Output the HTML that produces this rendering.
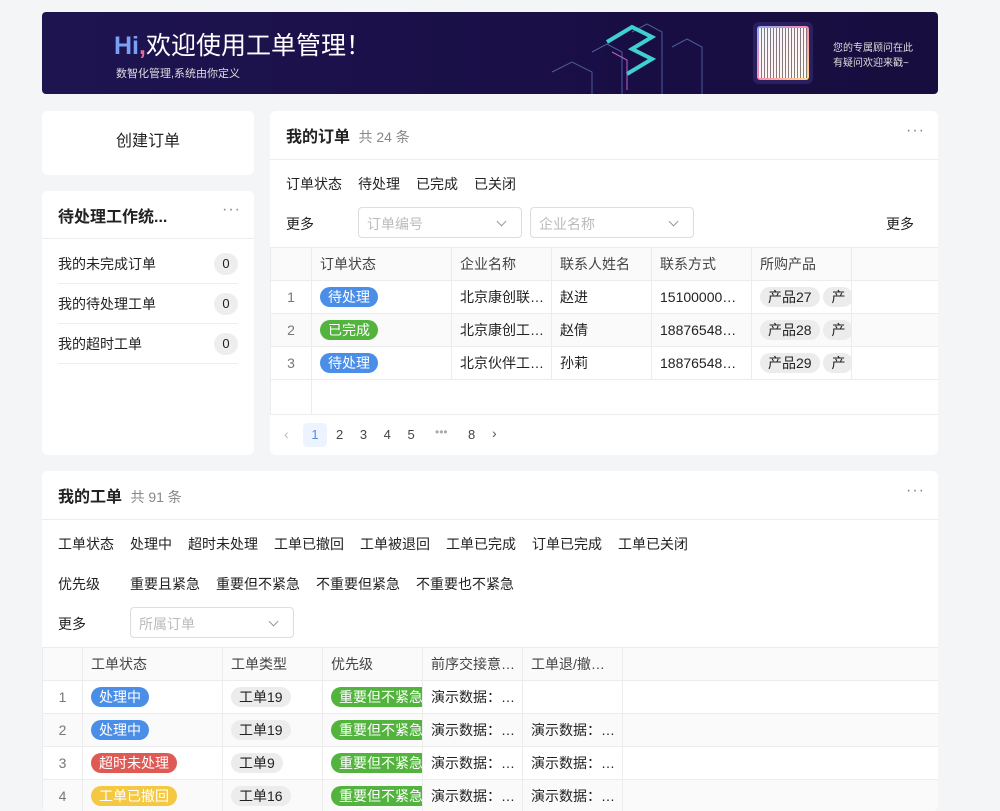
<!DOCTYPE html>
<html><head><meta charset="utf-8"><style>
*{box-sizing:border-box;margin:0;padding:0}
body{width:1000px;height:800px;overflow:hidden;background:#f4f5f7;font-family:"Liberation Sans","Noto Sans CJK SC",sans-serif;font-size:14px;color:#222;position:relative}
.abs{position:absolute}
.card{position:absolute;background:#fff;border-radius:6px}
.banner{left:42px;top:12px;width:896px;height:82px;border-radius:4px;background:linear-gradient(90deg,#1e1450 0%,#1a0f47 50%,#170d3e 100%);overflow:hidden}
.tag{display:inline-block;height:20px;line-height:20px;border-radius:10px;padding:0 8px;font-size:14px;color:#fff;white-space:nowrap}
.blue{background:#4b8ee8}.green{background:#52b33d}.red{background:#e05a55}.yellow{background:#f5c842}
.gray{background:#ececec;color:#222}
table{border-collapse:collapse;position:absolute;table-layout:fixed}
td{border:1px solid #ececec;height:33px;padding:0 8px;white-space:nowrap;overflow:hidden;font-size:14px}
tr.h td{background:#fafafa;color:#444;height:33px}
tr.alt td{background:#fafafa}
td.n{text-align:center;color:#777;padding:0}
.f{position:absolute;font-size:14px;color:#222}
.sel{position:absolute;height:31px;border:1px solid #ddd;border-radius:4px;color:#bbb;padding:6px 8px;font-size:14px}
.sel:after{content:"";position:absolute;right:16px;top:10px;width:6px;height:6px;border-right:1px solid #999;border-bottom:1px solid #999;transform:rotate(45deg)}
.dots{position:absolute;color:#888;font-size:16px;letter-spacing:1px}
.line{position:absolute;height:1px;background:#eee}
.badge{position:absolute;width:24px;height:22px;border-radius:11px;background:#eee;text-align:center;line-height:22px;font-size:13px}
</style></head><body>
<div class="card banner">
<div class="abs" style="left:72px;top:14px;font-size:25px;color:#fff"><span style="color:#7aa0f5;font-weight:bold">Hi</span><span style="color:#e76b9a;font-weight:bold">,</span>欢迎使用工单管理！</div>
<div class="abs" style="left:74px;top:53px;font-size:11px;color:#ddd">数智化管理,系统由你定义</div>
<svg class="abs" style="left:470px;top:0" width="220" height="82"><g fill="none" stroke="#4a5c9a" stroke-width="1"><path d="M40 60l20-10 20 10v22M80 40l15-8 15 8v42M160 35l15-8 15 8v47M120 20l15-8 15 8v62"/></g><path d="M95 30l25-15 20 10-20 12 20 10-25 15" fill="none" stroke="#3fd0d0" stroke-width="4"/><path d="M100 40l15 8v30" stroke="#c060d0" fill="none"/></svg>
<div class="abs" style="left:711px;top:10px;width:60px;height:62px;border-radius:6px;background:#2a2060;padding:4px"><div style="width:52px;height:54px;border-radius:3px;background:linear-gradient(135deg,#8af,#f8a,#fd8);padding:2px"><div style="width:48px;height:50px;background:repeating-linear-gradient(90deg,#fff 0 2px,#777 2px 3px),#fff;opacity:.9"></div></div></div>
<div class="abs" style="left:791px;top:29px;font-size:10px;color:#ddd;line-height:15px">您的专属顾问在此<br>有疑问欢迎来戳~</div>
</div>

<div class="card" style="left:42px;top:111px;width:212px;height:64px;text-align:center;line-height:62px;font-size:16px">创建订单</div>

<div class="card" style="left:42px;top:191px;width:212px;height:264px">
<div class="f" style="left:16px;top:12px;font-size:16px;font-weight:bold">待处理工作统...</div>
<div class="dots" style="left:180px;top:10px">···</div>
<div class="line" style="left:0;top:47px;width:212px"></div>
<div class="f" style="left:16px;top:63px">我的未完成订单</div><div class="badge" style="left:172px;top:62px">0</div>
<div class="line" style="left:16px;top:92px;width:180px"></div>
<div class="f" style="left:16px;top:103px">我的待处理工单</div><div class="badge" style="left:172px;top:102px">0</div>
<div class="line" style="left:16px;top:132px;width:180px"></div>
<div class="f" style="left:16px;top:143px">我的超时工单</div><div class="badge" style="left:172px;top:142px">0</div>
<div class="line" style="left:16px;top:172px;width:180px"></div>
</div>

<div class="card" style="left:270px;top:111px;width:668px;height:344px;overflow:hidden">
<div class="f" style="left:16px;top:12px;font-size:16px;font-weight:bold">我的订单 <span style="font-weight:normal;color:#888;font-size:14px;margin-left:4px">共 24 条</span></div>
<div class="dots" style="left:636px;top:11px">···</div>
<div class="line" style="left:0;top:48px;width:668px"></div>
<div class="f" style="left:16px;top:63px">订单状态</div><div class="f" style="left:88px;top:63px">待处理</div><div class="f" style="left:146px;top:63px">已完成</div><div class="f" style="left:204px;top:63px">已关闭</div>
<div class="f" style="left:16px;top:103px">更多</div>
<div class="sel" style="left:88px;top:96px;width:164px">订单编号</div>
<div class="sel" style="left:260px;top:96px;width:164px">企业名称</div>
<div class="f" style="left:616px;top:103px">更多</div>
<table style="left:0;top:136px;width:669px">
<colgroup><col style="width:41px"><col style="width:140px"><col style="width:100px"><col style="width:100px"><col style="width:100px"><col style="width:100px"><col style="width:88px"></colgroup>
<tr class="h"><td></td><td>订单状态</td><td>企业名称</td><td>联系人姓名</td><td>联系方式</td><td>所购产品</td><td></td></tr>
<tr><td class="n">1</td><td><span class="tag blue">待处理</span></td><td>北京康创联…</td><td>赵进</td><td>15100000…</td><td><span class="tag gray">产品27</span> <span class="tag gray">产</span></td><td></td></tr>
<tr class="alt"><td class="n">2</td><td><span class="tag green">已完成</span></td><td>北京康创工…</td><td>赵倩</td><td>18876548…</td><td><span class="tag gray">产品28</span> <span class="tag gray">产</span></td><td></td></tr>
<tr><td class="n">3</td><td><span class="tag blue">待处理</span></td><td>北京伙伴工…</td><td>孙莉</td><td>18876548…</td><td><span class="tag gray">产品29</span> <span class="tag gray">产</span></td><td></td></tr>
<tr><td style="height:35px"></td><td colspan="6" style="border-left:1px solid #ececec;border-right:none"></td></tr>
</table>
<div class="f" style="left:14px;top:315px;color:#bbb">‹</div>
<div class="abs" style="left:33px;top:312px;width:24px;height:24px;background:#eef4ff;border-radius:4px;color:#4b8ee8;text-align:center;line-height:24px;font-size:13px">1</div>
<div class="f" style="left:66px;top:316px;font-size:13px;color:#444;word-spacing:13px">2 3 4 5</div>
<div class="f" style="left:165px;top:314px;color:#aaa;font-size:12px">•••</div>
<div class="f" style="left:198px;top:316px;font-size:13px;color:#444">8</div>
<div class="f" style="left:222px;top:314px;color:#555">›</div>
</div>

<div class="card" style="left:42px;top:471px;width:896px;height:340px;overflow:hidden">
<div class="f" style="left:16px;top:12px;font-size:16px;font-weight:bold">我的工单 <span style="font-weight:normal;color:#888;font-size:14px;margin-left:4px">共 91 条</span></div>
<div class="dots" style="left:864px;top:11px">···</div>
<div class="line" style="left:0;top:48px;width:896px"></div>
<div class="f" style="left:16px;top:63px">工单状态</div>
<div class="f" style="left:88px;top:63px">处理中</div><div class="f" style="left:146px;top:63px">超时未处理</div><div class="f" style="left:232px;top:63px">工单已撤回</div><div class="f" style="left:318px;top:63px">工单被退回</div><div class="f" style="left:404px;top:63px">工单已完成</div><div class="f" style="left:490px;top:63px">订单已完成</div><div class="f" style="left:576px;top:63px">工单已关闭</div>
<div class="f" style="left:16px;top:103px">优先级</div>
<div class="f" style="left:88px;top:103px">重要且紧急</div><div class="f" style="left:174px;top:103px">重要但不紧急</div><div class="f" style="left:274px;top:103px">不重要但紧急</div><div class="f" style="left:374px;top:103px">不重要也不紧急</div>
<div class="f" style="left:16px;top:143px">更多</div>
<div class="sel" style="left:88px;top:136px;width:164px">所属订单</div>
<table style="left:0;top:176px;width:897px">
<colgroup><col style="width:40px"><col style="width:140px"><col style="width:100px"><col style="width:100px"><col style="width:100px"><col style="width:100px"><col style="width:317px"></colgroup>
<tr class="h"><td></td><td>工单状态</td><td>工单类型</td><td>优先级</td><td>前序交接意…</td><td>工单退/撤…</td><td></td></tr>
<tr><td class="n">1</td><td><span class="tag blue">处理中</span></td><td><span class="tag gray">工单19</span></td><td><span class="tag green">重要但不紧急</span></td><td>演示数据：…</td><td></td><td></td></tr>
<tr class="alt"><td class="n">2</td><td><span class="tag blue">处理中</span></td><td><span class="tag gray">工单19</span></td><td><span class="tag green">重要但不紧急</span></td><td>演示数据：…</td><td>演示数据：…</td><td></td></tr>
<tr><td class="n">3</td><td><span class="tag red">超时未处理</span></td><td><span class="tag gray">工单9</span></td><td><span class="tag green">重要但不紧急</span></td><td>演示数据：…</td><td>演示数据：…</td><td></td></tr>
<tr class="alt"><td class="n">4</td><td><span class="tag yellow">工单已撤回</span></td><td><span class="tag gray">工单16</span></td><td><span class="tag green">重要但不紧急</span></td><td>演示数据：…</td><td>演示数据：…</td><td></td></tr>
</table>
</div>
</body></html>
